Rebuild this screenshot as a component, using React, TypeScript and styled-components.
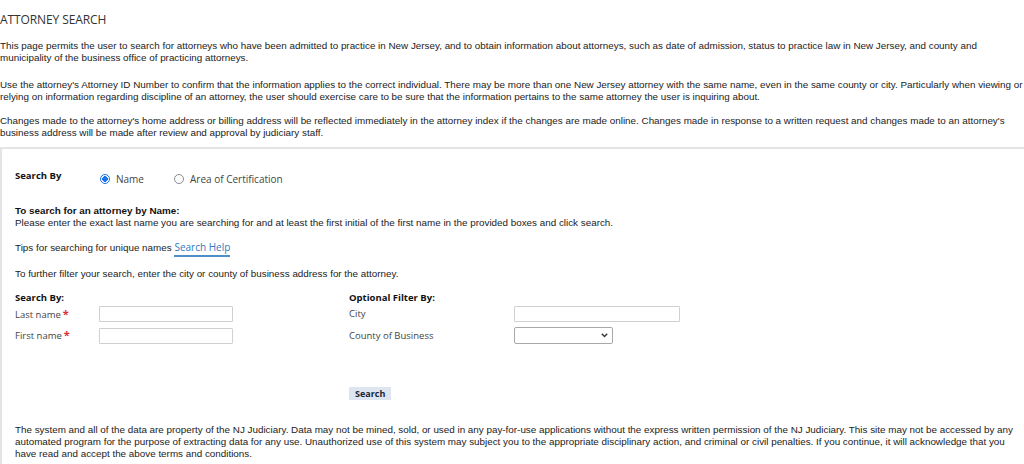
import React from "react";
import styled, { createGlobalStyle } from "styled-components";

const Global = createGlobalStyle`
  html, body { margin: 0; padding: 0; background: #fff; }
  body { font-family: "Liberation Sans", Arial, sans-serif; color: #222; }
  * { box-sizing: border-box; }
`;

const Page = styled.div`
  width: 1024px;
  height: 464px;
  overflow: hidden;
  padding-top: 12px;
`;

const Title = styled.h1`
  margin: 0;
  font-family: "Open Sans", sans-serif;
  font-weight: 400;
  font-size: 12px;
  line-height: 16px;
  color: #333;
  letter-spacing: -0.1px;
`;

const Intro = styled.p<{ $top: number }>`
  margin: ${(p) => p.$top}px 0 0 0;
  font-size: 9.85px;
  line-height: 12px;
  color: #222;
`;

const Panel = styled.section`
  margin-top: 8px;
  border-top: 2px solid #e4e4e4;
  border-left: 2px solid #e4e4e4;
  padding: 0 0 20px 13px;
`;

const SearchByRow = styled.div`
  display: flex;
  align-items: center;
  height: 20px;
  margin-top: 20px;
`;

const RowLabel = styled.div`
  width: 85px;
  font-family: "Open Sans", sans-serif;
  font-weight: 700;
  font-size: 9.5px;
  color: #111;
  margin-top: -7px;
`;

const RadioLabel = styled.label`
  display: flex;
  align-items: center;
  gap: 6px;
  margin-right: 30px;
  font-family: "Open Sans", sans-serif;
  font-size: 10px;
  color: #444;
`;

const Radio = styled.input`
  appearance: none;
  margin: 0;
  width: 10px;
  height: 10px;
  border-radius: 50%;
  border: 1px solid #8a8a8a;
  background: #fff;
  &:checked {
    border-color: #1a73e8;
    background: radial-gradient(circle, #1a73e8 0 2.6px, #fff 3px);
  }
`;

const Text = styled.p<{ $top: number }>`
  margin: ${(p) => p.$top}px 0 0 0;
  font-size: 9.85px;
  line-height: 12px;
  color: #222;
`;

const Strong = styled.strong`
  font-weight: 700;
  color: #111;
`;

const HelpLink = styled.a`
  font-family: "Open Sans", sans-serif;
  font-size: 10px;
  color: #2f7bbf;
  text-decoration: none;
  border-bottom: 2px solid #4f8fc8;
  padding-bottom: 1px;
`;

const FormGrid = styled.div`
  display: grid;
  grid-template-columns: 84px 250px 165px 1fr;
  row-gap: 5px;
  align-items: center;
  margin-top: 12px;
  font-family: "Open Sans", sans-serif;
  font-size: 9.5px;
  color: #444;
`;

const GroupHead = styled.div`
  grid-column: span 2;
  font-weight: 700;
  color: #111;
  line-height: 12px;
  margin-bottom: -3px;
`;

const FieldLabel = styled.label`
  line-height: 14px;
  white-space: nowrap;
`;

const Req = styled.span`
  color: #d9303a;
  font-weight: 700;
  font-size: 11px;
  margin-left: 2px;
`;

const TextInput = styled.input<{ $w: number }>`
  display: block;
  width: ${(p) => p.$w}px;
  height: 16px;
  margin: 0;
  border: 1px solid #d0d0d0;
  border-radius: 1px;
  background: #fff;
  padding: 0 3px;
  font-size: 10px;
`;

const SelectWrap = styled.div`
  position: relative;
  width: 99px;
  height: 17px;
`;

const Select = styled.select`
  appearance: none;
  display: block;
  width: 99px;
  height: 17px;
  margin: 0;
  border: 1px solid #a8a8a8;
  border-radius: 2px;
  background: #fff;
  font-size: 9px;
`;

const Chevron = styled.svg`
  position: absolute;
  right: 5px;
  top: 6px;
  width: 7px;
  height: 5px;
  pointer-events: none;
`;

const Empty = styled.div``;

const ButtonCell = styled.div`
  grid-column: 3;
  margin-top: 38px;
`;

const SearchButton = styled.button`
  display: block;
  font-family: "Open Sans", sans-serif;
  font-weight: 700;
  font-size: 9px;
  color: #1a2533;
  background: #dde6f0;
  border: none;
  height: 13px;
  padding: 0 6px;
  line-height: 13px;
`;

const Disclaimer = styled.p`
  margin: 24px 0 0 0;
  font-size: 9.85px;
  line-height: 12px;
  color: #222;
`;

export default function App() {
  return (
    <Page>
      <Global />
      <Title>ATTORNEY SEARCH</Title>
      <Intro $top={12}>
        This page permits the user to search for attorneys who have been admitted to practice in New Jersey, and to obtain information about attorneys, such as date of admission, status to practice law in New Jersey, and county and municipality of the business office of practicing attorneys.
      </Intro>
      <Intro $top={15}>
        Use the attorney's Attorney ID Number to confirm that the information applies to the correct individual. There may be more than one New Jersey attorney with the same name, even in the same county or city. Particularly when viewing or relying on information regarding discipline of an attorney, the user should exercise care to be sure that the information pertains to the same attorney the user is inquiring about.
      </Intro>
      <Intro $top={12}>
        Changes made to the attorney's home address or billing address will be reflected immediately in the attorney index if the changes are made online. Changes made in response to a written request and changes made to an attorney's business address will be made after review and approval by judiciary staff.
      </Intro>
      <Panel>
        <SearchByRow>
          <RowLabel>Search By</RowLabel>
          <RadioLabel>
            <Radio type="radio" name="by" defaultChecked />
            Name
          </RadioLabel>
          <RadioLabel>
            <Radio type="radio" name="by" />
            Area of Certification
          </RadioLabel>
        </SearchByRow>
        <Text $top={16}>
          <Strong>To search for an attorney by Name:</Strong>
          <br />
          Please enter the exact last name you are searching for and at least the first initial of the first name in the provided boxes and click search.
        </Text>
        <Text $top={12}>
          Tips for searching for unique names <HelpLink href="#">Search Help</HelpLink>
        </Text>
        <Text $top={14}>
          To further filter your search, enter the city or county of business address for the attorney.
        </Text>
        <FormGrid>
          <GroupHead>Search By:</GroupHead>
          <GroupHead>Optional Filter By:</GroupHead>

          <FieldLabel>
            Last name<Req>*</Req>
          </FieldLabel>
          <div>
            <TextInput $w={134} type="text" />
          </div>
          <FieldLabel>City</FieldLabel>
          <div>
            <TextInput $w={166} type="text" />
          </div>

          <FieldLabel>
            First name<Req>*</Req>
          </FieldLabel>
          <div>
            <TextInput $w={134} type="text" />
          </div>
          <FieldLabel>County of Business</FieldLabel>
          <SelectWrap>
            <Select defaultValue="">
              <option value=""></option>
            </Select>
            <Chevron viewBox="0 0 7 5">
              <path d="M0.8 0.8 L3.5 3.6 L6.2 0.8" fill="none" stroke="#333" strokeWidth="1.4" />
            </Chevron>
          </SelectWrap>

          <Empty />
          <Empty />
          <ButtonCell>
            <SearchButton type="button">Search</SearchButton>
          </ButtonCell>
        </FormGrid>
        <Disclaimer>
          The system and all of the data are property of the NJ Judiciary. Data may not be mined, sold, or used in any pay-for-use applications without the express written permission of the NJ Judiciary. This site may not be accessed by any automated program for the purpose of extracting data for any use. Unauthorized use of this system may subject you to the appropriate disciplinary action, and criminal or civil penalties. If you continue, it will acknowledge that you have read and accept the above terms and conditions.
        </Disclaimer>
      </Panel>
    </Page>
  );
}
